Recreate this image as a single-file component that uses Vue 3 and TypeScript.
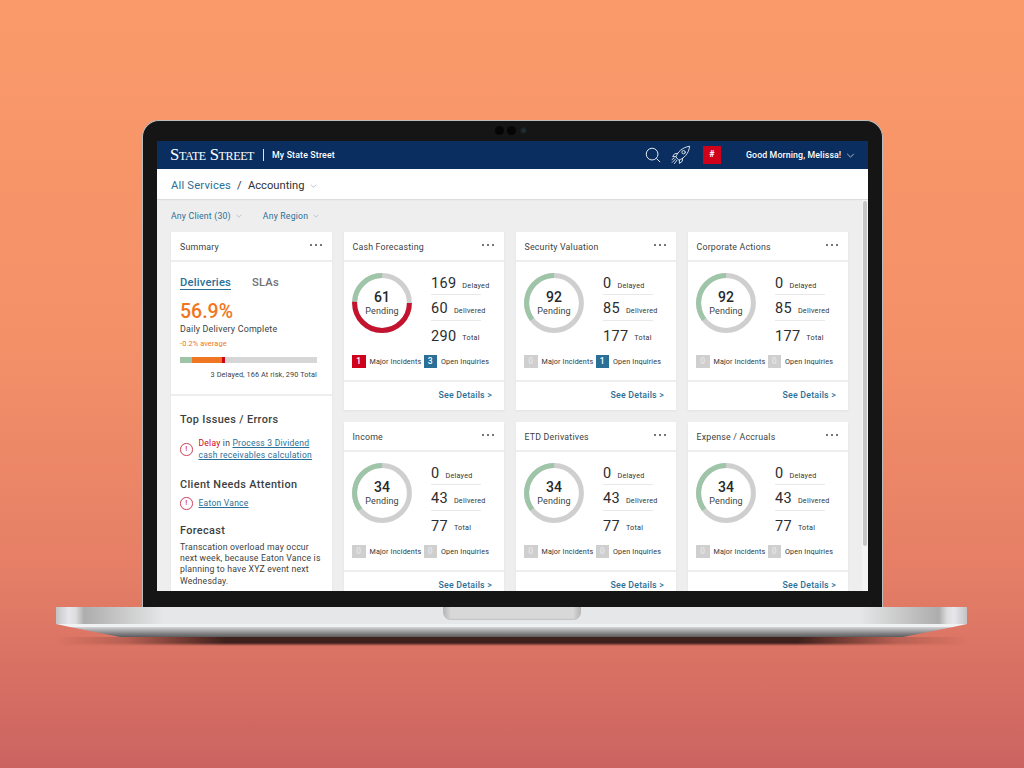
<template>
  <div class="page">
    <div class="laptop">
      <div class="lid">
        <div class="camera"><i></i><i></i><i class="lens"></i></div>
        <div class="screen">
          <header class="topbar">
            <span class="logo">State Street</span>
            <span class="logo-sep"></span>
            <span class="product">My State Street</span>
            <svg class="icon-search" viewBox="0 0 18 18" fill="none" stroke="#e8edf3" stroke-width="1.1">
              <circle cx="8" cy="8" r="6.6" />
              <path d="M12.8 12.8 17 17" />
            </svg>
            <svg class="icon-rocket" viewBox="0 0 20 20" fill="none" stroke="#e8edf3" stroke-width="0.9" stroke-linejoin="round" stroke-linecap="round">
              <path d="M6.4 13.6 4.9 11.9C6.6 7.4 10.7 2.6 18.6 1.2 17.8 9 12.7 13.3 8.2 15.1Z" />
              <circle cx="12.6" cy="7.2" r="1.7" />
              <path d="M6.6 8.4 3.6 8.8 1.6 11.6 4.8 11.6" />
              <path d="M11.6 13.4 11.2 16.4 8.4 18.4 8.4 15.2" />
              <path d="M4.6 14 1.2 17.4M5.8 15.4 3.4 18.6M3.2 12.9 1 14.6" />
            </svg>
            <span class="hash">#</span>
            <span class="greeting">Good Morning, Melissa!</span>
            <svg class="chevron chevron-nav" viewBox="0 0 10 6"><path d="M1 1l4 4 4-4" /></svg>
          </header>

          <div class="breadcrumb">
            <span class="crumb-link">All Services</span>
            <span class="crumb-sep">/</span>
            <span class="crumb-current">Accounting</span>
            <svg class="chevron" viewBox="0 0 10 6"><path d="M1 1l4 4 4-4" /></svg>
          </div>

          <main class="content">
            <div class="filters">
              <span class="filter">Any Client (30)
                <svg class="chevron" viewBox="0 0 10 6"><path d="M1 1l4 4 4-4" /></svg>
              </span>
              <span class="filter">Any Region
                <svg class="chevron" viewBox="0 0 10 6"><path d="M1 1l4 4 4-4" /></svg>
              </span>
            </div>

            <div class="grid">
              <section class="card summary">
                <div class="card-head">
                  <span>Summary</span>
                  <span class="dots"><i></i><i></i><i></i></span>
                </div>
                <div class="summary-top">
                  <div class="tabs">
                    <span class="tab active">Deliveries</span>
                    <span class="tab">SLAs</span>
                  </div>
                  <div class="percent">56.9%</div>
                  <div class="percent-label">Daily Delivery Complete</div>
                  <div class="percent-delta">-0.2% average</div>
                  <div class="bar">
                    <span class="bar-green"></span>
                    <span class="bar-orange"></span>
                    <span class="bar-red"></span>
                  </div>
                  <div class="bar-note">3 Delayed, 166 At risk, 290 Total</div>
                </div>
                <div class="summary-bottom">
                  <h3 class="first">Top Issues / Errors</h3>
                  <div class="issue issue-top">
                    <span class="alert">!</span>
                    <p><span class="red">Delay</span> in <a>Process 3 Dividend cash receivables calculation</a></p>
                  </div>
                  <h3 class="client">Client Needs Attention</h3>
                  <div class="issue">
                    <span class="alert">!</span>
                    <p><a>Eaton Vance</a></p>
                  </div>
                  <h3 class="forecast">Forecast</h3>
                  <p class="forecast-text">Transcation overload may occur next week, because Eaton Vance is planning to have XYZ event next Wednesday.</p>
                </div>
              </section>

              <section v-for="card in cards" :key="card.title" class="card">
                <div class="card-head">
                  <span>{{ card.title }}</span>
                  <span class="dots"><i></i><i></i><i></i></span>
                </div>
                <div class="card-body">
                  <div class="metrics">
                    <div class="ring">
                      <svg viewBox="0 0 60 60">
                        <circle class="ring-base" cx="30" cy="30" r="27.4" />
                        <circle
                          v-for="seg in card.segments"
                          :key="seg.color"
                          cx="30"
                          cy="30"
                          r="27.4"
                          fill="none"
                          stroke-width="5"
                          :stroke="seg.color"
                          :stroke-dasharray="dash(seg.size)"
                          :transform="`rotate(${seg.from - 90} 30 30)`"
                        />
                      </svg>
                      <div class="ring-text">
                        <strong>{{ card.pending }}</strong>
                        <span>Pending</span>
                      </div>
                    </div>
                    <div class="stats">
                      <div class="stat"><b>{{ card.delayed }}</b><span>Delayed</span></div>
                      <div class="stat"><b>{{ card.delivered }}</b><span>Delivered</span></div>
                      <div class="stat"><b>{{ card.total }}</b><span>Total</span></div>
                    </div>
                  </div>
                  <div class="badges">
                    <span class="badge" :class="{ 'badge-red': card.incidents > 0 }">{{ card.incidents }}</span>
                    <span class="badge-label">Major Incidents</span>
                    <span class="badge" :class="{ 'badge-blue': card.inquiries > 0 }">{{ card.inquiries }}</span>
                    <span class="badge-label">Open Inquiries</span>
                  </div>
                </div>
                <div class="card-foot">See Details &gt;</div>
              </section>
            </div>
          </main>

          <div class="scrollbar"><span></span></div>
        </div>
      </div>

      <div class="base">
        <div class="notch"></div>
      </div>
      <div class="lip"></div>
      <div class="underside"></div>
      <div class="shadow"></div>
    </div>
  </div>
</template>

<script setup lang="ts">
interface Segment {
  color: string
  from: number
  size: number
}

interface ServiceCard {
  title: string
  pending: number
  delayed: number
  delivered: number
  total: number
  incidents: number
  inquiries: number
  segments: Segment[]
}

const GREEN = '#9ec5a8'
const RED = '#c4132e'

const greenOnly: Segment[] = [{ color: GREEN, from: 233, size: 127 }]

const cards: ServiceCard[] = [
  {
    title: 'Cash Forecasting',
    pending: 61,
    delayed: 169,
    delivered: 60,
    total: 290,
    incidents: 1,
    inquiries: 3,
    segments: [
      { color: GREEN, from: 272, size: 88 },
      { color: RED, from: 90, size: 182 },
    ],
  },
  { title: 'Security Valuation', pending: 92, delayed: 0, delivered: 85, total: 177, incidents: 0, inquiries: 1, segments: greenOnly },
  { title: 'Corporate Actions', pending: 92, delayed: 0, delivered: 85, total: 177, incidents: 0, inquiries: 0, segments: greenOnly },
  { title: 'Income', pending: 34, delayed: 0, delivered: 43, total: 77, incidents: 0, inquiries: 0, segments: greenOnly },
  { title: 'ETD Derivatives', pending: 34, delayed: 0, delivered: 43, total: 77, incidents: 0, inquiries: 0, segments: greenOnly },
  { title: 'Expense / Accruals', pending: 34, delayed: 0, delivered: 43, total: 77, incidents: 0, inquiries: 0, segments: greenOnly },
]

const circumference = 2 * Math.PI * 27.4

// size is in degrees
const dash = (size: number): string => {
  const len = (size / 360) * circumference
  return `${len} ${circumference - len}`
}
</script>

<style>
html,
body {
  margin: 0;
  overflow: hidden;
}
</style>

<style scoped>
.page {
  width: 1024px;
  height: 768px;
  overflow: hidden;
  padding-top: 120px;
  padding-left: 56px;
  box-sizing: border-box;
  background: linear-gradient(180deg, #fa9a6a 0%, #f49068 45%, #e57e66 75%, #cb6361 100%);
  font-family: Roboto, "Liberation Sans", sans-serif;
  color: #3c3f42;
}

.laptop {
  width: 911px;
  display: flex;
  flex-direction: column;
}

.lid {
  width: 741px;
  height: 487px;
  margin-left: 86px;
  box-sizing: border-box;
  padding: 20px 14px 15px 14px;
  background: #151515;
  border: 1.5px solid #bcbcbc;
  border-bottom: 0;
  border-radius: 17px 17px 0 0;
  position: relative;
}

.camera {
  position: absolute;
  top: 5px;
  left: 352px;
  display: flex;
  gap: 3.5px;
}

.camera i {
  width: 8.5px;
  height: 8.5px;
  border-radius: 50%;
  background: #050505;
}

.camera .lens {
  background: radial-gradient(circle, #26343a 0%, #101214 70%);
}

.screen {
  width: 711px;
  height: 450px;
  background: #eeeeee;
  overflow: hidden;
  position: relative;
}

.topbar {
  height: 28px;
  background: #0a2e5f;
  display: flex;
  align-items: center;
  padding-left: 13px;
  color: #fff;
}

.logo {
  font-family: "Liberation Serif", serif;
  font-variant: small-caps;
  font-size: 16.6px;
  letter-spacing: -0.35px;
  width: 82px;
  white-space: nowrap;
  margin-top: -1px;
}

.logo-sep {
  width: 1px;
  height: 12px;
  background: #dfe5ec;
  margin-left: 11px;
}

.product {
  font-size: 8.8px;
  font-weight: 500;
  letter-spacing: 0.15px;
  margin-left: 8px;
  width: 358px;
  white-space: nowrap;
}

.icon-search {
  width: 16px;
  height: 16px;
  margin-left: 15px;
}

.icon-rocket {
  width: 20px;
  height: 20px;
  margin-left: 10px;
}

.hash {
  width: 18px;
  height: 18px;
  background: #d0021b;
  margin-left: 12px;
  font-size: 9px;
  font-weight: 700;
  text-align: center;
  line-height: 17px;
}

.greeting {
  margin-left: 25px;
  font-size: 8.8px;
  font-weight: 500;
  letter-spacing: 0.1px;
  white-space: nowrap;
}

.chevron {
  width: 9px;
  height: 5px;
  fill: none;
  stroke: #9aa9b5;
  stroke-width: 1;
  flex: none;
}

.chevron-nav {
  margin-left: 5px;
  stroke: #c4d0dc;
}

.breadcrumb {
  height: 30px;
  box-sizing: border-box;
  padding-top: 3px;
  background: #fff;
  display: flex;
  align-items: center;
  padding-left: 14px;
  font-size: 11.2px;
  letter-spacing: 0.2px;
  box-shadow: 0 1px 1px #dcdcdc;
  position: relative;
}

.crumb-link {
  color: #2a6f97;
}

.crumb-sep {
  margin: 0 6px;
  color: #333;
}

.crumb-current {
  color: #2f3235;
  letter-spacing: 0;
}

.breadcrumb .chevron {
  margin-left: 5px;
  width: 7px;
  height: 4px;
}

.content {
  padding: 0 0 0 14px;
}

.filters {
  height: 33px;
  display: flex;
  align-items: center;
  gap: 21px;
  font-size: 8.7px;
  letter-spacing: 0.2px;
  color: #2a6f97;
}

.filter {
  display: flex;
  align-items: center;
  gap: 5px;
  white-space: nowrap;
}

.filter .chevron {
  width: 6px;
  height: 4px;
}

.grid {
  display: grid;
  grid-template-columns: 161px 160px 160px 160px;
  grid-auto-rows: 178px;
  gap: 12px;
}

.card {
  background: #fff;
  display: flex;
  flex-direction: column;
  box-shadow: 0 1px 2px #e2e2e2;
}

.summary {
  grid-row: span 2;
}

.card-head {
  height: 30px;
  box-sizing: border-box;
  padding: 1px 10px 0 8.5px;
  border-bottom: 2px solid #eeeeee;
  flex: none;
  display: flex;
  align-items: center;
  justify-content: space-between;
  font-size: 8.8px;
  letter-spacing: 0.2px;
  color: #3c3f42;
}

.summary .card-head {
  padding-left: 9px;
}

.dots {
  display: flex;
  gap: 3.2px;
  margin-top: -3px;
}

.dots i {
  width: 2px;
  height: 2px;
  border-radius: 50%;
  background: #44474a;
}

.card-body {
  height: 118px;
  flex: none;
  padding: 9px 8px 0;
  box-sizing: border-box;
}

.metrics {
  display: flex;
  gap: 19px;
}

.ring {
  width: 60px;
  height: 60px;
  margin-top: 1.5px;
  position: relative;
  flex: none;
}

.ring svg {
  width: 60px;
  height: 60px;
  display: block;
}

.ring-base {
  fill: none;
  stroke: #cfcfcf;
  stroke-width: 5;
}

.ring-text {
  position: absolute;
  inset: 0;
  display: flex;
  flex-direction: column;
  align-items: center;
  justify-content: center;
  padding-top: 3px;
  box-sizing: border-box;
}

.ring-text strong {
  font-size: 14px;
  font-weight: 500;
  line-height: 15px;
  color: #26282a;
}

.ring-text span {
  font-size: 9px;
  line-height: 13px;
  color: #3c3f42;
  letter-spacing: 0.1px;
}

.stats {
  width: 50px;
  flex: none;
}

.stat {
  height: 24px;
  box-sizing: border-box;
  padding-top: 2px;
  display: flex;
  align-items: center;
  gap: 6px;
  white-space: nowrap;
  border-bottom: 1px solid #e8e8e8;
}

.stat:nth-child(2) {
  height: 26px;
}

.stat:last-child {
  border-bottom: 0;
  height: 30px;
  padding-top: 0;
}

.stat b {
  font-size: 14.5px;
  font-weight: 400;
  letter-spacing: 0.3px;
  color: #2b2d2f;
}

.stat span {
  font-size: 7.2px;
  letter-spacing: 0.25px;
  color: #333538;
  margin-top: 3px;
}

.badges {
  display: flex;
  align-items: center;
  margin-top: 3.5px;
  white-space: nowrap;
}

.badge {
  width: 13.5px;
  height: 13.5px;
  flex: none;
  background: #cfcfcf;
  color: #e6e6e6;
  font-size: 8.5px;
  font-weight: 500;
  line-height: 13.5px;
  text-align: center;
}

.badge-red {
  background: #d0021b;
  color: #fff;
}

.badge-blue {
  background: #2a6f97;
  color: #fff;
}

.badge-label {
  font-size: 7.2px;
  letter-spacing: 0.15px;
  color: #333538;
  margin-left: 4px;
  width: 54px;
}

.badge-label:last-child {
  width: auto;
}

.card-foot {
  border-top: 2px solid #eeeeee;
  flex: 1;
  display: flex;
  align-items: center;
  justify-content: flex-end;
  padding: 0 12px 2px 0;
  font-size: 8.8px;
  font-weight: 500;
  letter-spacing: 0.2px;
  color: #2a6f97;
}

.summary-top {
  height: 134px;
  flex: none;
  box-sizing: border-box;
  padding: 14px 15px 0 9px;
  border-bottom: 2px solid #eeeeee;
}

.tabs {
  display: flex;
  gap: 21px;
  font-size: 11.2px;
  font-weight: 500;
  letter-spacing: 0.2px;
  color: #6e7073;
}

.tab {
  line-height: 13px;
}

.tab.active {
  color: #2a6f97;
  border-bottom: 1px solid #2a6f97;
}

.percent {
  font-size: 19.5px;
  line-height: 22px;
  font-weight: 500;
  color: #ef7622;
  margin-top: 11px;
}

.percent-label {
  font-size: 8.9px;
  line-height: 12px;
  letter-spacing: 0.2px;
  color: #3c3f42;
}

.percent-delta {
  font-size: 7.4px;
  line-height: 10px;
  letter-spacing: 0.1px;
  color: #ef7622;
  margin-top: 4px;
}

.bar {
  height: 5.5px;
  background: #d6d6d6;
  display: flex;
  margin-top: 8px;
}

.bar span {
  display: block;
  height: 5.5px;
}

.bar-green {
  width: 12px;
  background: #9ec5a8;
}

.bar-orange {
  width: 30px;
  background: #ef7622;
}

.bar-red {
  width: 3px;
  background: #d0021b;
}

.bar-note {
  text-align: right;
  font-size: 7.3px;
  line-height: 10px;
  letter-spacing: 0.1px;
  color: #3c3f42;
  margin-top: 7px;
}

.summary-bottom {
  padding: 17px 8px 0 9px;
}

.summary-bottom h3 {
  margin: 0;
  font-size: 10.9px;
  line-height: 14px;
  font-weight: 500;
  letter-spacing: 0.35px;
  color: #3c3f42;
}

.summary-bottom .client {
  margin-top: 17px;
}

.summary-bottom .forecast {
  margin-top: 14px;
}

.issue {
  display: flex;
  align-items: center;
  gap: 6px;
  margin-top: 5px;
}

.issue-top {
  margin-top: 11px;
}

.issue p {
  margin: 0;
  font-size: 8.5px;
  line-height: 11.5px;
  letter-spacing: 0.25px;
}

.issue a {
  color: #2a6f97;
  text-decoration: underline;
}

.red {
  color: #d0021b;
}

.alert {
  width: 10.5px;
  height: 10.5px;
  flex: none;
  border: 1px solid #d0405a;
  border-radius: 50%;
  color: #d0021b;
  font-size: 8px;
  line-height: 10.5px;
  text-align: center;
}

.forecast-text {
  margin: 4px 0 0;
  font-size: 8.7px;
  line-height: 11.4px;
  letter-spacing: 0.18px;
  color: #3c3f42;
}

.scrollbar {
  position: absolute;
  top: 59px;
  right: 0;
  bottom: 0;
  width: 6.5px;
  background: #f4f4f4;
}

.scrollbar span {
  display: block;
  width: 4.5px;
  height: 345px;
  margin: 1px 0 0 1px;
  border-radius: 2px;
  background: #c6c6c6;
}

.base {
  height: 17px;
  background: linear-gradient(90deg, #c2c2c2 0, #d2d2d4 5px, #e6e6ec 13px, #dcdcde 20px, #adadad 28px, #c4c4c4 60px, #e6e7e9 108px, #e6e7e9 803px, #c4c4c4 851px, #adadad 883px, #dcdcde 891px, #e6e6ec 898px, #d2d2d4 906px, #c2c2c2 911px);
  display: flex;
  justify-content: center;
}

.notch {
  width: 138px;
  height: 13px;
  border-radius: 0 0 8px 8px;
  background: linear-gradient(90deg, #b4b4b4 0, #d8d8d8 8px, #d8d8d8 130px, #b4b4b4 138px);
  box-shadow: inset 0 -1px 1px #c4c4c4;
}

.lip {
  height: 3px;
  background: #f0f1f2;
  clip-path: polygon(0 0, 100% 0, calc(100% - 14px) 100%, 14px 100%);
}

.underside {
  height: 10px;
  background: linear-gradient(180deg, #d6d6d8 0%, #a8a8aa 35%, #7c7c7e 70%, #5c5c5e 100%);
  clip-path: polygon(0 0, 100% 0, calc(100% - 50px) 100%, 50px 100%);
  margin: 0 14px;
}

.shadow {
  height: 9px;
  margin: 0;
  background: linear-gradient(90deg, rgba(62, 32, 28, 0) 0, rgba(100, 50, 42, 0.3) 70px, #3e201c 170px, #3e201c 741px, rgba(100, 50, 42, 0.3) 841px, rgba(62, 32, 28, 0) 911px);
  mask-image: linear-gradient(180deg, #000 0%, #000 65%, transparent 100%);
}
</style>
